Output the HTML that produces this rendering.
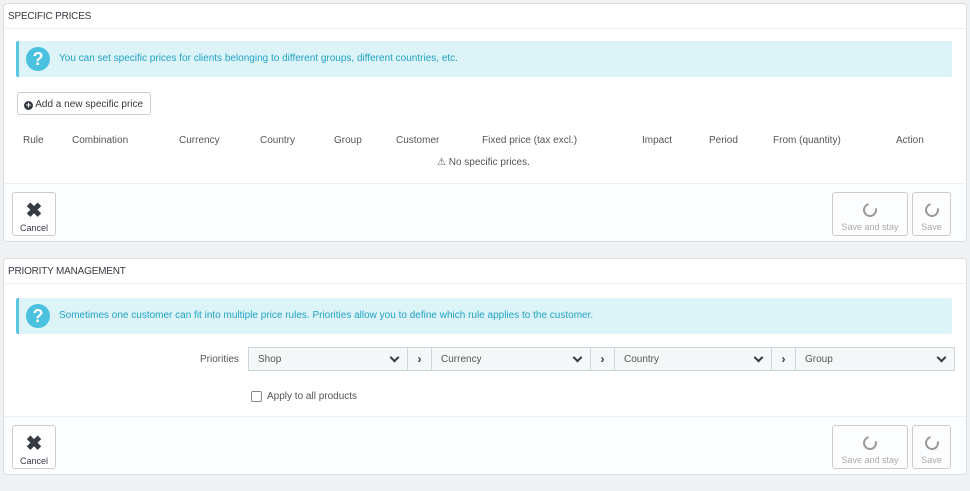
<html><head><style>
body{margin:0;background:#eff1f2;font-family:"Liberation Sans",sans-serif;font-size:10px;color:#555;width:970px;height:491px;position:relative;overflow:hidden}
.p{position:absolute;left:3px;width:962px;background:#fff;border:1px solid #dcdfe1;border-radius:4px}
.h{position:absolute;left:0;right:0;top:0;height:24px;border-bottom:1px solid #eef0f1;font-size:10px;line-height:26px;padding-left:4px;color:#363a41;letter-spacing:-0.2px}
.al{position:absolute;left:12px;right:14px;height:36px;background:#dcf3f8;border-left:3px solid #5bc6e0;border-radius:2px;color:#23a3c4;line-height:36px;padding-left:40px;box-sizing:border-box}
.q{position:absolute;left:7px;top:6px;width:24px;height:24px;border-radius:50%;background:#4ac1de;color:#fff;font-weight:bold;font-size:18px;line-height:24px;text-align:center}
.f{position:absolute;left:0;right:0;bottom:0;height:57px;background:#fcfdfe;border-top:1px solid #eef0f1;border-radius:0 0 4px 4px}
.b{position:absolute;border:1px solid #ccc;border-radius:3px;background:#fff;text-align:center;font-size:9px;box-sizing:border-box}
.dis{color:#aaa;border-color:#ccc;background:#fcfdfe}
.sp{display:block;margin:10px auto 5px;width:10px;height:10px;border:2px solid #999;border-radius:50%;border-top-color:transparent;transform:rotate(30deg)}
.x{display:block;font-size:20px;font-weight:bold;color:#363a41;margin-top:8px;margin-bottom:2px;line-height:20px}
.t{position:absolute;top:131px;color:#555}
.s{position:absolute;top:347px;height:24px;border:1px solid #cfd6d9;background:#f5f8f9;box-sizing:border-box;line-height:22px;padding-top:1px;padding-left:9px;color:#555}
.s:after{content:"";position:absolute;right:9px;top:6px;width:5px;height:5px;border-right:2px solid #363a41;border-bottom:2px solid #363a41;transform:rotate(45deg)}
.a{position:absolute;top:347px;height:24px;width:25px;border:1px solid #cfd6d9;background:#f5f8f9;box-sizing:border-box;text-align:center;line-height:22px;font-weight:bold;color:#363a41;font-size:12px}
</style></head><body>
<div class="p" style="top:3px;height:237px">
<div class="h">SPECIFIC PRICES</div>
<div class="al" style="top:37px"><span class="q">?</span>You can set specific prices for clients belonging to different groups, different countries, etc.</div>
<div class="b" style="left:13px;top:88px;width:134px;height:23px;line-height:23px;font-size:10px;color:#363a41;text-align:left;padding-left:6px"><b style="display:inline-block;width:9px;height:9px;border-radius:50%;background:#363a41;color:#fff;font-size:9px;line-height:9px;text-align:center;vertical-align:-1px">+</b> Add a new specific price</div>
<span class="t" style="left:19px">Rule</span><span class="t" style="left:68px">Combination</span><span class="t" style="left:175px">Currency</span><span class="t" style="left:256px">Country</span><span class="t" style="left:330px">Group</span><span class="t" style="left:392px">Customer</span><span class="t" style="left:478px">Fixed price (tax excl.)</span><span class="t" style="left:638px">Impact</span><span class="t" style="left:705px">Period</span><span class="t" style="left:769px">From (quantity)</span><span class="t" style="left:892px">Action</span>
<span class="t" style="left:433px;top:153px">⚠ No specific prices.</span>
<div class="f"><div class="b" style="left:8px;top:8px;width:44px;height:44px;color:#363a41"><span class="x">✖</span>Cancel</div>
<div class="b dis" style="left:828px;top:8px;width:76px;height:44px"><span class="sp"></span>Save and stay</div>
<div class="b dis" style="left:908px;top:8px;width:39px;height:44px"><span class="sp"></span>Save</div></div>
</div>
<div class="p" style="top:258px;height:215px">
<div class="h">PRIORITY MANAGEMENT</div>
<div class="al" style="top:39px"><span class="q">?</span>Sometimes one customer can fit into multiple price rules. Priorities allow you to define which rule applies to the customer.</div>
<div class="f"><div class="b" style="left:8px;top:8px;width:44px;height:44px;color:#363a41"><span class="x">✖</span>Cancel</div>
<div class="b dis" style="left:828px;top:8px;width:76px;height:44px"><span class="sp"></span>Save and stay</div>
<div class="b dis" style="left:908px;top:8px;width:39px;height:44px"><span class="sp"></span>Save</div></div>
</div>
<span style="position:absolute;left:200px;top:354px">Priorities</span>
<div class="s" style="left:248px;width:160px">Shop</div><div class="a" style="left:407px">›</div>
<div class="s" style="left:431px;width:160px">Currency</div><div class="a" style="left:590px">›</div>
<div class="s" style="left:614px;width:158px">Country</div><div class="a" style="left:771px">›</div>
<div class="s" style="left:795px;width:160px">Group</div>
<span style="position:absolute;left:251px;top:391px;width:9px;height:9px;border:1px solid #888;border-radius:2px;background:#fff"></span>
<span style="position:absolute;left:267px;top:391px">Apply to all products</span>
</body></html>
